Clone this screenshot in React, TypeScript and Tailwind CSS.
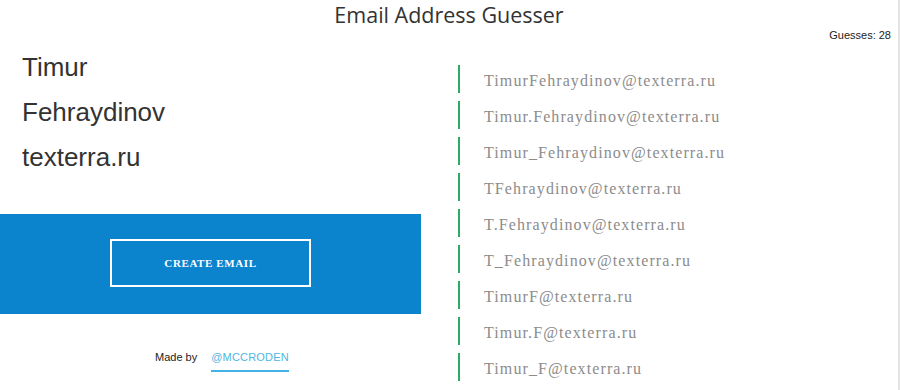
const first = "Timur";
const last = "Fehraydinov";
const domain = "texterra.ru";

const guesses = [
  `${first}${last}`,
  `${first}.${last}`,
  `${first}_${last}`,
  `${first[0]}${last}`,
  `${first[0]}.${last}`,
  `${first[0]}_${last}`,
  `${first}${last[0]}`,
  `${first}.${last[0]}`,
  `${first}_${last[0]}`,
].map((g) => `${g}@${domain}`);

export default function App() {
  return (
    <div className="relative h-[390px] w-full overflow-hidden border-r-2 border-[#e3e3e3] bg-white">
      {/* Header */}
      <h1 className="h-[30px] text-center text-[21.5px] leading-[30px] text-[#333] [font-family:'Open_Sans',sans-serif]">
        Email Address Guesser
      </h1>
      <p className="-mt-[2px] h-[14px] pr-[7px] text-right text-[11px] leading-[14px] text-[#222] [font-family:'Liberation_Sans',Arial,sans-serif]">
        Guesses: 28
      </p>

      <div className="flex">
        {/* Left column */}
        <div className="w-[421px] shrink-0">
          <div className="mt-[3px] pl-[22px] text-[26px] leading-[45px] text-[#333] [font-family:'Liberation_Sans',Arial,sans-serif]">
            <p>{first}</p>
            <p>{last}</p>
            <p>{domain}</p>
          </div>

          <div className="mt-[34px] flex h-[100px] items-center justify-center bg-[#0b83cd]">
            <button className="-mt-[2px] h-[48px] w-[201px] border-2 border-white text-[11px] font-bold tracking-[0.6px] text-white [font-family:'Liberation_Serif','Times_New_Roman',serif]">
              CREATE EMAIL
            </button>
          </div>

          <div className="mt-[35px] flex items-start pl-[155px] text-[11px] [font-family:'Liberation_Sans',Arial,sans-serif]">
            <span className="text-[#222]">Made by</span>
            <a className="ml-[14px] border-b-2 border-[#45b2e6] pb-[4px] tracking-[0.2px] text-[#4fb6e3]">
              @MCCRODEN
            </a>
          </div>
        </div>

        {/* Right column */}
        <ul className="ml-[37px] mt-[23px] flex-1">
          {guesses.map((g) => (
            <li
              key={g}
              className="mb-[8px] flex h-[28px] items-center border-l-2 border-[#2bab67] pl-[24px] pt-[3px] text-[16px] tracking-[1.1px] text-[#8c8c8c] [font-family:'Liberation_Serif','Times_New_Roman',serif]"
            >
              {g}
            </li>
          ))}
        </ul>
      </div>
    </div>
  );
}
